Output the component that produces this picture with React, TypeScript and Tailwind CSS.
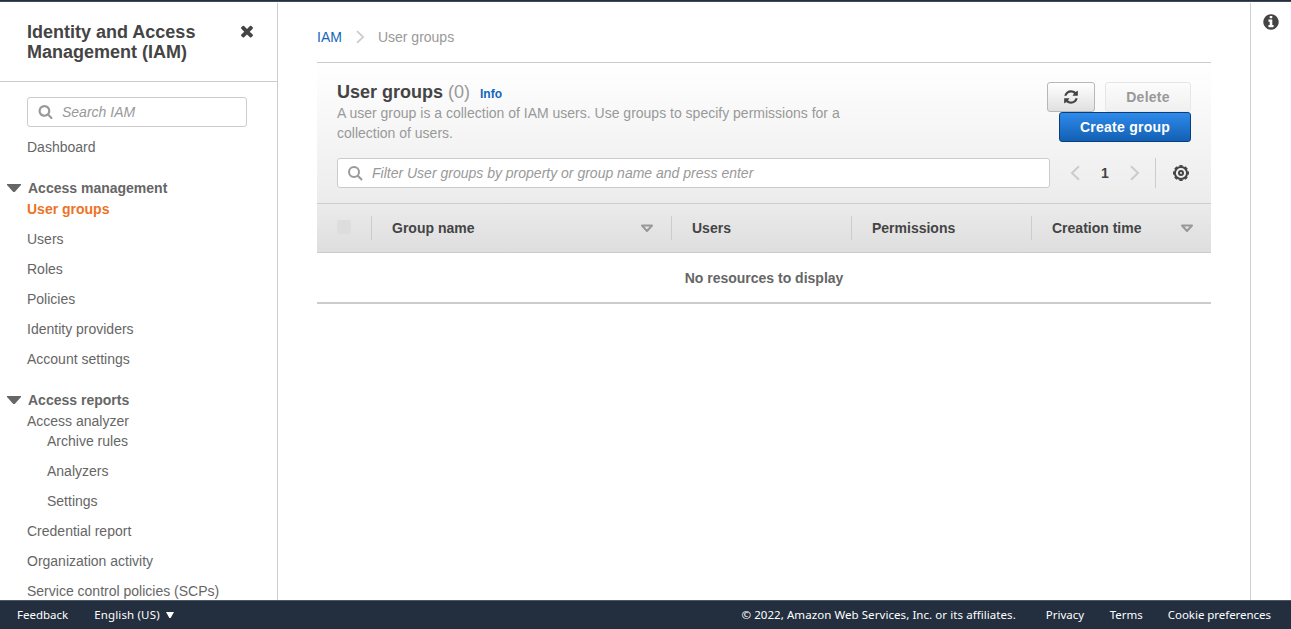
import React from "react";

type GlyphProps = { d: string; className?: string };

const Glyph = ({ d, className }: GlyphProps) => (
  <svg viewBox="0 0 1792 1792" fill="currentColor" className={className} aria-hidden="true">
    <path d={d} />
  </svg>
);

const TIMES =
  "M1490 1322q0 40-28 68l-136 136q-28 28-68 28t-68-28l-294-294-294 294q-28 28-68 28t-68-28l-136-136q-28-28-28-68t28-68l294-294-294-294q-28-28-28-68t28-68l136-136q28-28 68-28t68 28l294 294 294-294q28-28 68-28t68 28l136 136q28 28 28 68t-28 68l-294 294 294 294q28 28 28 68z";
const SEARCH =
  "M1216 832q0-185-131.5-316.5t-316.5-131.5-316.5 131.5-131.5 316.5 131.5 316.5 316.5 131.5 316.5-131.5 131.5-316.5zm512 832q0 52-38 90t-90 38q-54 0-90-38l-343-342q-179 124-399 124-143 0-273.5-55.5t-225-150-150-225-55.5-273.5 55.5-273.5 150-225 225-150 273.5-55.5 273.5 55.5 225 150 150 225 55.5 273.5q0 220-124 399l343 343q37 37 37 90z";
const REFRESH =
  "M1639 1056q0 5-1 7-64 268-268 434.5t-478 166.5q-146 0-282.5-55t-243.5-157l-129 129q-19 19-45 19t-45-19-19-45v-448q0-26 19-45t45-19h448q26 0 45 19t19 45-19 45l-137 137q71 66 161 102t187 36q134 0 250-65t186-179q11-17 53-117 8-23 30-23h192q13 0 22.5 9.5t9.5 22.5zm25-800v448q0 26-19 45t-45 19h-448q-26 0-45-19t-19-45 19-45l138-138q-148-137-349-137-134 0-250 65t-186 179q-11 17-53 117-8 23-30 23h-199q-13 0-22.5-9.5t-9.5-22.5v-7q65-268 270-434.5t480-166.5q146 0 284 55.5t245 156.5l130-129q19-19 45-19t45 19 19 45z";
const INFO =
  "M1152 1376v-160q0-14-9-23t-23-9h-96v-512q0-14-9-23t-23-9h-320q-14 0-23 9t-9 23v160q0 14 9 23t23 9h96v320h-96q-14 0-23 9t-9 23v160q0 14 9 23t23 9h448q14 0 23-9t9-23zm-128-896v-160q0-14-9-23t-23-9h-192q-14 0-23 9t-9 23v160q0 14 9 23t23 9h192q14 0 23-9t9-23zm640 416q0 209-103 385.5t-279.5 279.5-385.5 103-385.5-103-279.5-279.5-103-385.5 103-385.5 279.5-279.5 385.5-103 385.5 103 279.5 279.5 103 385.5z";

const Chevron = ({ left = false, className }: { left?: boolean; className?: string }) => (
  <svg viewBox="0 0 10 16" fill="none" stroke="#ccc" strokeWidth="2" className={className} aria-hidden="true">
    <path d={left ? "M9 1.2 2 8l7 6.8" : "M1 1.2 8 8l-7 6.8"} />
  </svg>
);

const Gear = () => (
  <svg viewBox="0 0 16 16" fill="none" stroke="#444" className="size-4" aria-hidden="true">
    <circle cx="8" cy="8" r="6.1" strokeWidth="2" />
    <circle cx="8" cy="8" r="7.3" strokeWidth="1.4" pathLength="16" strokeDasharray="1.2 0.8" strokeDashoffset="0.6" />
    <circle cx="8" cy="8" r="2" strokeWidth="2" />
  </svg>
);

const SortIcon = () => (
  <svg viewBox="0 0 14 9" className="h-[9px] w-[14px]" aria-hidden="true">
    <path d="M2 1.5h10L7 7z" fill="none" stroke="#999" strokeWidth="2" strokeLinejoin="round" />
  </svg>
);

const Item = ({ children, nested = false, active = false }: { children: string; nested?: boolean; active?: boolean }) => (
  <li className={`mb-2.5 h-5 leading-5 ${nested ? "pl-5" : ""} ${active ? "font-bold text-[#ec7326]" : ""}`}>{children}</li>
);

const Group = ({ title, children }: { title: string; children: React.ReactNode }) => (
  <section>
    <h3 className="mt-[21px] mb-px flex h-5 items-center font-bold">
      <svg viewBox="0 0 14 8" className="-ml-5 mr-[7px] h-2 w-[14px]" aria-hidden="true">
        <path d="M0 0h14v1L8.2 7.4q-1.2 1-2.4 0L0 1z" fill="#666" />
      </svg>
      {title}
    </h3>
    <ul>{children}</ul>
  </section>
);

const Sidebar = () => (
  <aside className="mt-px flex w-[278px] shrink-0 flex-col overflow-hidden border-r border-[#ccc] text-[#666]">
    <header className="flex h-[79px] shrink-0 items-start justify-between border-b border-[#ccc] pt-[19px] pr-[21px] pl-[27px] text-[#444]">
      <h2 className="w-[190px] text-[18px] leading-5 font-bold">Identity and Access Management (IAM)</h2>
      <Glyph d={TIMES} className="size-[18px]" />
    </header>
    <nav className="pt-[15px] pl-[27px]">
      <label className="mb-2.5 flex h-[30px] w-[220px] items-center rounded-[3px] border border-[#ccc] pl-[9.5px] text-[#999] italic">
        <Glyph d={SEARCH} className="mr-[9.5px] mb-px size-[15px]" />
        Search IAM
      </label>
      <ul>
        <Item>Dashboard</Item>
      </ul>
      <Group title="Access management">
        <Item active>User groups</Item>
        <Item>Users</Item>
        <Item>Roles</Item>
        <Item>Policies</Item>
        <Item>Identity providers</Item>
        <Item>Account settings</Item>
      </Group>
      <Group title="Access reports">
        <li className="h-5 leading-5">Access analyzer</li>
        <Item nested>Archive rules</Item>
        <Item nested>Analyzers</Item>
        <Item nested>Settings</Item>
        <Item>Credential report</Item>
        <Item>Organization activity</Item>
        <Item>Service control policies (SCPs)</Item>
      </Group>
    </nav>
  </aside>
);

const Column = ({ title, sortable = false, className }: { title: string; sortable?: boolean; className: string }) => (
  <div className={`flex h-6 items-center justify-between border-l border-[#ccc] pr-[17px] pl-5 ${className}`}>
    {title}
    {sortable && <SortIcon />}
  </div>
);

const Main = () => (
  <main className="min-w-0 flex-1 pt-[25px] pr-[39px] pl-[39px]">
    <nav className="flex h-5 items-center text-[#999]">
      <span className="text-[#1166bb]">IAM</span>
      <Chevron className="mr-[13px] ml-[14px] h-[14px] w-[9px]" />
      <span>User groups</span>
    </nav>
    <section className="mt-[15px] border-b-2 border-[#ccc]">
      <div className="h-[141px] border-t border-[#ccc] bg-linear-to-b from-white to-[#ececec] px-5 pt-[19px]">
        <div className="flex h-[76px] justify-between">
          <div className="w-[520px]">
            <h1 className="flex h-[21px] items-baseline text-[18px] leading-5">
              <span className="font-bold text-[#444]">User groups</span>
              <span className="ml-[5px] text-[#999]">(0)</span>
              <span className="ml-2.5 text-[12px] font-bold text-[#1166bb]">Info</span>
            </h1>
            <p className="leading-5 text-[#999]">
              A user group is a collection of IAM users. Use groups to specify permissions for a collection of users.
            </p>
          </div>
          <div className="flex w-[150px] flex-wrap content-start justify-end gap-x-2.5 font-bold tracking-[0.25px]">
            <button className="flex h-[30px] w-12 items-center justify-center rounded-[3px] border border-[#b7b7b7] bg-linear-to-b from-white to-[#e0e0e0] text-[#444]">
              <Glyph d={REFRESH} className="size-4" />
            </button>
            <button className="h-[30px] w-[86px] rounded-[3px] border border-[#e6e6e6] bg-linear-to-b from-[#fcfcfc] to-[#f0f0f0] text-[#999]">
              Delete
            </button>
            <button className="h-[30px] w-[132px] rounded-[3px] border border-[#093f78] bg-linear-to-b from-[#2e8aea] to-[#1260b4] text-white">
              Create group
            </button>
          </div>
        </div>
        <div className="flex h-[30px] items-center">
          <label className="flex h-[30px] w-[713px] items-center rounded-[3px] border border-[#ccc] bg-white pl-2.5 text-[#999] italic">
            <svg viewBox="0 0 15 15" fill="none" stroke="#999" strokeWidth="2" className="mr-[9px] size-[15px]" aria-hidden="true">
              <circle cx="6" cy="6" r="5" />
              <path d="m9.8 9.8 4.2 4.2" />
            </svg>
            Filter User groups by property or group name and press enter
          </label>
          <Chevron left className="ml-5 h-4 w-2.5" />
          <span className="w-[50px] text-center font-bold text-[#444]">1</span>
          <Chevron className="h-4 w-2.5" />
          <span className="mr-[17px] ml-[15px] h-[30px] w-px bg-[#ccc]" />
          <Gear />
        </div>
      </div>
      <div className="flex h-[50px] items-center border-y border-[#ccc] bg-linear-to-b from-[#ebebeb] to-[#dedede] font-bold text-[#444]">
        <div className="w-[54px] pl-5">
          <div className="mb-0.5 size-[14px] rounded-[2px] bg-[#ddd]" />
        </div>
        <Column title="Group name" sortable className="w-[300px]" />
        <Column title="Users" className="w-[180px]" />
        <Column title="Permissions" className="w-[180px]" />
        <Column title="Creation time" sortable className="w-[180px]" />
      </div>
      <p className="flex h-[49px] items-center justify-center font-bold text-[#666]">No resources to display</p>
    </section>
  </main>
);

export default function App() {
  return (
    <div className="flex h-[629px] w-[1291px] flex-col overflow-hidden bg-white font-['Liberation_Sans',Arial,sans-serif] text-[14px] leading-5">
      <div className="h-0.5 shrink-0 border-b border-[#414b5a] bg-[#232f3e]" />
      <div className="flex min-h-0 flex-1">
        <Sidebar />
        <Main />
        <aside className="mt-px flex w-[41px] justify-center border-l border-[#ccd1d1] pt-2.5 text-[#444]">
          <Glyph d={INFO} className="size-[18px]" />
        </aside>
      </div>
      <footer className="flex h-[29px] shrink-0 items-center border-t border-[#4b5864] bg-[#232f3e] pr-5 pl-[17px] font-['Noto_Sans',sans-serif] text-[11.5px] text-white">
        <span>Feedback</span>
        <span className="ml-[26px] tracking-[0.15px]">English (US)</span>
        <svg viewBox="0 0 8 6" className="ml-[6px] h-1.5 w-2" aria-hidden="true">
          <path d="M0 0h8L4.6 6H3.4z" fill="white" />
        </svg>
        <span className="ml-auto tracking-[0.07px]">© 2022, Amazon Web Services, Inc. or its affiliates.</span>
        <span className="ml-[30px]">Privacy</span>
        <span className="ml-[25.5px]">Terms</span>
        <span className="ml-[25px] tracking-[-0.04px]">Cookie preferences</span>
      </footer>
    </div>
  );
}
